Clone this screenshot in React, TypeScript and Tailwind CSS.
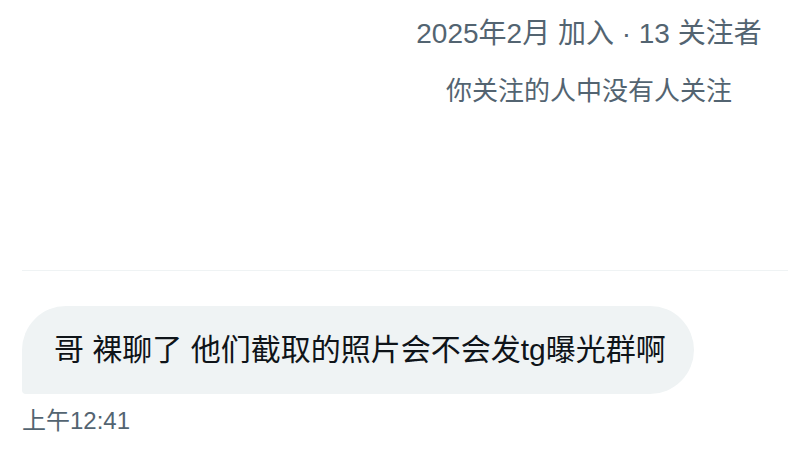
import React from 'react';

// DM thread header + single received message
export default function App() {
    return (
        <div className="w-[788px] h-[464px] bg-white overflow-hidden font-['Liberation_Sans','Noto_Sans_CJK_SC',sans-serif]">
            {/* Profile summary (centered in right column) */}
            <div className="flex justify-end">
                <div className="w-[398px] flex flex-col items-center text-[#536471]">
                    <p className="mt-[16px] text-[28px] leading-[36px] whitespace-nowrap">
                        2025年2月 加入 · 13 关注者
                    </p>
                    <p className="mt-[22px] text-[26px] leading-[34px] whitespace-nowrap">
                        你关注的人中没有人关注
                    </p>
                </div>
            </div>

            <div className="ml-[22px] mt-[162px] h-px bg-[#eff3f4]" />

            {/* Message */}
            <div className="px-[22px]">
                <div className="mt-[35px] inline-flex bg-[#eff3f4] rounded-[44px] rounded-bl-[4px] pl-[32px] pr-[28px] py-[24px]">
                    <span className="text-[30px] leading-[40px] text-[#0f1419] whitespace-nowrap">
                        哥 裸聊了 他们截取的照片会不会发tg曝光群啊
                    </span>
                </div>
                <p className="mt-[12px] text-[24px] leading-[30px] text-[#536471]">上午12:41</p>
            </div>
        </div>
    );
}
